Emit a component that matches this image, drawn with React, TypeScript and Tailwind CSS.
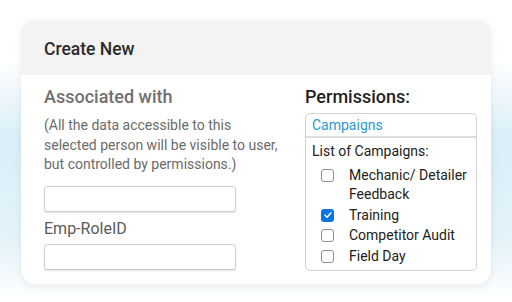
import React from "react";

const campaigns = [
  { label: "Mechanic/ Detailer Feedback", checked: false },
  { label: "Training", checked: true },
  { label: "Competitor Audit", checked: false },
  { label: "Field Day", checked: false },
];

function Checkbox({ checked }: { checked: boolean }) {
  if (checked) {
    return (
      <span className="mt-[3px] flex h-[13px] w-[13px] shrink-0 items-center justify-center rounded-[3px] bg-[#0b74e5]">
        <svg viewBox="0 0 12 12" className="h-[10px] w-[10px]">
          <path d="M2.5 6.2 L5 8.6 L9.6 3.4" fill="none" stroke="#fff" strokeWidth="1.8" strokeLinecap="round" strokeLinejoin="round" />
        </svg>
      </span>
    );
  }
  return <span className="mt-[3px] h-[13px] w-[13px] shrink-0 rounded-[3px] border border-[#8f8f8f] bg-white" />;
}

export default function App() {
  return (
    <div
      className="h-[302px] w-[512px] overflow-hidden bg-[linear-gradient(180deg,#ffffff_60px,#d8eef8_140px,#e4f3fa_240px,#ffffff_300px)] pt-[20px] pl-[21px]"
      style={{ fontFamily: "Roboto, 'Liberation Sans', sans-serif" }}
    >
      <div className="w-[470px] overflow-hidden rounded-[14px] bg-white shadow-[0_2px_8px_rgba(0,0,0,0.07)]">
        {/* Header */}
        <div className="flex h-[55px] items-center bg-[#f3f3f3] px-[23px] pt-[3px]">
          <h2 className="text-[17.5px] font-medium text-[#2b2b2b]">Create New</h2>
        </div>

        {/* Body */}
        <div className="flex pl-[23px] pr-[14px] pt-[11px] pb-[13px]">
          <div className="w-[240px]">
            <div className="text-[18px] leading-[22px] font-medium text-[#707070]">Associated with</div>
            <p className="mt-[8px] w-[236px] text-[14px] leading-[19.5px] text-[#6b6b6b]">
              (All the data accessible to this selected person will be visible to user, but controlled by permissions.)
            </p>
            <input className="mt-[11px] block h-[26px] w-[192px] rounded-[3px] border border-[#cfcfcf] bg-white shadow-[0_1px_2px_rgba(0,0,0,0.12)] outline-none" />
            <div className="mt-[7px] text-[16px] leading-[20px] text-[#5a5a5a]">Emp-RoleID</div>
            <input className="mt-[5px] block h-[26px] w-[192px] rounded-[3px] border border-[#cfcfcf] bg-white shadow-[0_1px_2px_rgba(0,0,0,0.12)] outline-none" />
          </div>

          <div className="ml-auto w-[172px]">
            <div className="text-[18px] leading-[22px] font-medium text-[#1f1f1f]">Permissions:</div>
            <div className="mt-[5px] rounded-[5px] border border-[#d2d2d2]">
              <div className="flex h-[24px] items-center border-b-2 border-[#dcdcdc] px-[6px] text-[14px] text-[#2a9bd5]">
                Campaigns
              </div>
              <div className="px-[6px] pt-[4px] pb-[4px] text-[14px] leading-[19.5px] text-[#222]">
                <div>List of Campaigns:</div>
                <ul className="mt-[4px] flex flex-col gap-[1px] pl-[9px]">
                  {campaigns.map((c) => (
                    <li key={c.label} className="flex gap-[15px]">
                      <Checkbox checked={c.checked} />
                      <span>{c.label}</span>
                    </li>
                  ))}
                </ul>
              </div>
            </div>
          </div>
        </div>
      </div>
    </div>
  );
}
